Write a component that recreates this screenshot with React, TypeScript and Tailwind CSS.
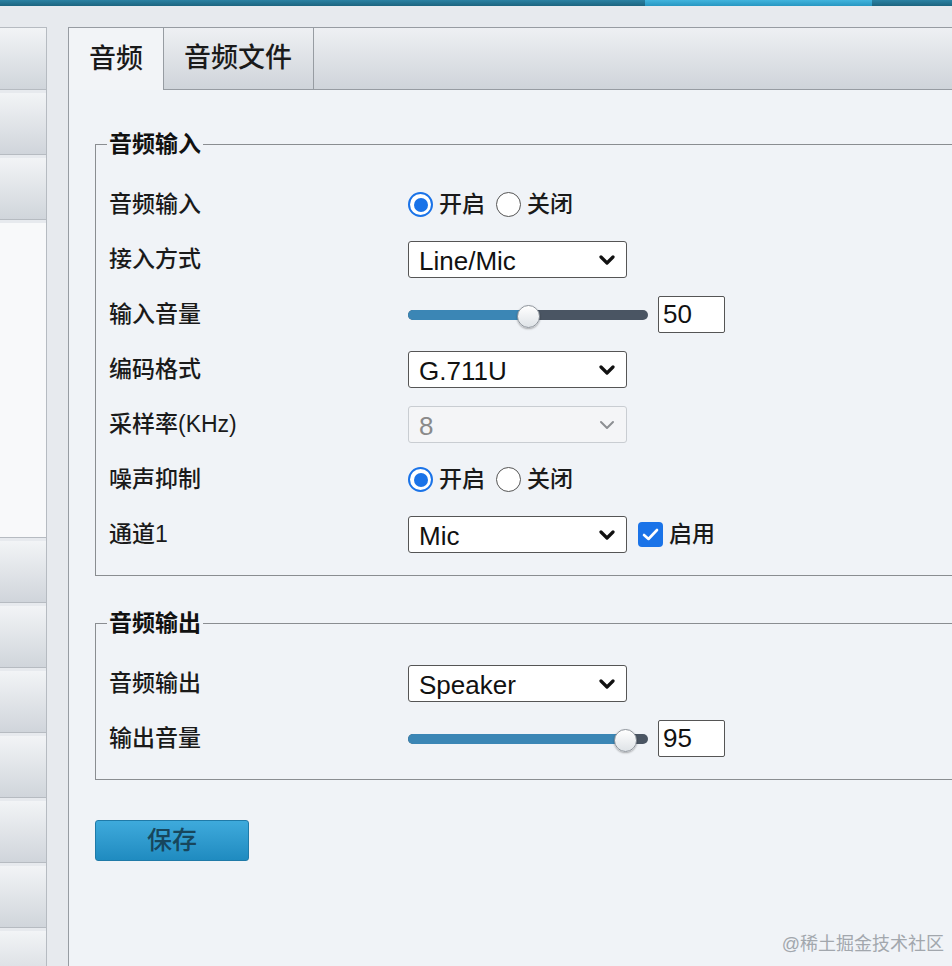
import { useState } from "react";

const Chevron = ({ disabled }: { disabled?: boolean }) => (
  <svg
    width="16"
    height="10"
    viewBox="0 0 16 10"
    className="pointer-events-none absolute right-[12px] top-1/2 -translate-y-1/2"
  >
    <path
      d="M2 2 L8 8 L14 2"
      fill="none"
      stroke={disabled ? "#8c8f93" : "#111"}
      strokeWidth={disabled ? 2 : 3.2}
      strokeLinecap="round"
      strokeLinejoin="round"
    />
  </svg>
);

const Select = ({
  value,
  options,
  disabled,
}: {
  value: string;
  options: string[];
  disabled?: boolean;
}) => (
  <div className="relative w-[219px] h-[37px]">
    <select
      defaultValue={value}
      disabled={disabled}
      className={
        disabled
          ? "appearance-none w-full h-full rounded-[3px] border border-[#c9cdd2] bg-[#f4f5f7] pl-[10px] text-[26px] text-[#8a8a8a] outline-none"
          : "appearance-none w-full h-full rounded-[3px] border border-[#555] bg-white pl-[10px] text-[26px] text-[#111] outline-none"
      }
    >
      {options.map((o) => (
        <option key={o}>{o}</option>
      ))}
    </select>
    <Chevron disabled={disabled} />
  </div>
);

const Radio = ({ checked, label }: { checked: boolean; label: string }) => (
  <div className="flex items-center gap-[6px]">
    {checked ? (
      <div className="flex h-[25px] w-[25px] items-center justify-center rounded-full border-[2.5px] border-[#1a73e8] bg-white">
        <div className="h-[14px] w-[14px] rounded-full bg-[#1a73e8]" />
      </div>
    ) : (
      <div className="h-[25px] w-[25px] rounded-full border-[1.5px] border-[#555] bg-white" />
    )}
    <span className="text-[23px] font-medium leading-none">{label}</span>
  </div>
);

const OnOff = () => (
  <div className="flex items-center gap-[11px]">
    <Radio checked label="开启" />
    <Radio checked={false} label="关闭" />
  </div>
);

const Slider = ({ value }: { value: number }) => {
  const pos = 11.5 + (217 * value) / 100;
  return (
    <div className="flex items-center gap-[10px]">
      <div className="relative h-[10px] w-[240px] rounded-full bg-[#4a5563]">
        <div
          className="absolute left-0 top-0 h-full rounded-full bg-[#3b86b5]"
          style={{ width: pos }}
        />
        <div
          className="absolute top-[-5px] h-[23px] w-[23px] rounded-full border border-[#8e949b] bg-gradient-to-b from-white to-[#dfe3e7] shadow-[0_1px_2px_rgba(0,0,0,0.3)]"
          style={{ left: pos - 11.5 }}
        />
      </div>
      <div className="flex h-[37px] w-[67px] items-center rounded-[2px] border border-[#555] bg-white pl-[4px] text-[26px] text-[#111]">
        {value}
      </div>
    </div>
  );
};

const Row = ({ label, children }: { label: string; children: React.ReactNode }) => (
  <div className="flex h-[55px] items-center">
    <div className="w-[299px] shrink-0 text-[23px] font-medium text-[#1a1a1a]">{label}</div>
    {children}
  </div>
);

const Group = ({
  title,
  className,
  children,
}: {
  title: string;
  className: string;
  children: React.ReactNode;
}) => (
  <fieldset
    className={`w-[880px] border border-[#8a8d91] pl-[13px] pt-[18px] pb-[13px] ${className}`}
  >
    <legend className="-ml-[2px] px-[2px] text-[23px] font-bold leading-[30px] text-[#111]">
      {title}
    </legend>
    {children}
  </fieldset>
);

const App = () => {
  const [tab, setTab] = useState("audio");
  const side =
    "h-[62px] shrink-0 border-b border-[#b6bbc1] bg-gradient-to-b from-[#f2f4f6] to-[#d0d5db]";

  return (
    <div className="relative h-[966px] w-[952px] overflow-hidden bg-[#e7eaee] font-['Liberation_Sans','Noto_Sans_CJK_SC',sans-serif] text-[#1a1a1a]">
      <div className="flex h-[6px]">
        <div className="w-[645px] bg-gradient-to-b from-[#2b82a3] to-[#1d6580]" />
        <div className="w-[227px] bg-gradient-to-b from-[#41b4dd] to-[#2797c2]" />
        <div className="flex-1 bg-gradient-to-b from-[#2b82a3] to-[#1d6580]" />
      </div>

      <div className="flex h-[960px] pt-[21px]">
        <div className="flex w-[47px] shrink-0 flex-col gap-[3px] overflow-hidden border-r border-t border-[#b6bbc1]">
          <div className={side} />
          <div className={side} />
          <div className={side} />
          <div className="h-[315px] shrink-0 border-b border-[#b6bbc1] bg-[#f8f9fa]" />
          <div className={side} />
          <div className={side} />
          <div className={side} />
          <div className={side} />
          <div className={side} />
          <div className={side} />
          <div className={side} />
        </div>

        <div className="ml-[21px] min-w-0 flex-1 border-l border-t border-[#979ca2] bg-[#f0f3f7]">
          <div className="flex h-[62px] text-[27px] font-medium text-[#1a1a1a]">
            <button
              onClick={() => setTab("audio")}
              className={
                tab === "audio"
                  ? "w-[95px] shrink-0 border-r border-[#979ca2] bg-[#f2f4f7] pl-[20px] text-left"
                  : "w-[95px] shrink-0 border-b border-r border-[#979ca2] bg-gradient-to-b from-[#eef0f3] to-[#cfd4da] pl-[20px] text-left"
              }
            >
              音频
            </button>
            <button
              onClick={() => setTab("file")}
              className={
                tab === "file"
                  ? "w-[150px] shrink-0 border-r border-[#979ca2] bg-[#f2f4f7] pl-[20px] text-left"
                  : "w-[150px] shrink-0 border-b border-r border-[#979ca2] bg-gradient-to-b from-[#eef0f3] to-[#cfd4da] pl-[20px] text-left"
              }
            >
              音频文件
            </button>
            <div className="flex-1 border-b border-[#979ca2] bg-gradient-to-b from-[#eef0f3] to-[#cfd4da]" />
          </div>

          <div className="pl-[26px]">
            <Group title="音频输入" className="mt-[39px]">
              <Row label="音频输入">
                <OnOff />
              </Row>
              <Row label="接入方式">
                <Select value="Line/Mic" options={["Line/Mic", "Line"]} />
              </Row>
              <Row label="输入音量">
                <Slider value={50} />
              </Row>
              <Row label="编码格式">
                <Select value="G.711U" options={["G.711U", "G.711A", "AAC"]} />
              </Row>
              <Row label="采样率(KHz)">
                <Select value="8" options={["8", "16"]} disabled />
              </Row>
              <Row label="噪声抑制">
                <OnOff />
              </Row>
              <Row label="通道1">
                <Select value="Mic" options={["Mic", "Line"]} />
                <div className="ml-[11px] flex items-center gap-[6px]">
                  <div className="flex h-[25px] w-[25px] items-center justify-center rounded-[4px] bg-[#1a73e8]">
                    <svg width="17" height="13" viewBox="0 0 17 13">
                      <path
                        d="M2 7 L6.5 11 L15 2"
                        fill="none"
                        stroke="#fff"
                        strokeWidth="2.6"
                        strokeLinecap="round"
                        strokeLinejoin="round"
                      />
                    </svg>
                  </div>
                  <span className="text-[23px] font-medium">启用</span>
                </div>
              </Row>
            </Group>

            <Group title="音频输出" className="mt-[32px]">
              <Row label="音频输出">
                <Select value="Speaker" options={["Speaker", "Line Out"]} />
              </Row>
              <Row label="输出音量">
                <Slider value={95} />
              </Row>
            </Group>

            <button className="mt-[40px] h-[41px] w-[154px] rounded-[3px] border border-[#1f7aa8] bg-gradient-to-b from-[#3eaadc] to-[#1f8bc0] text-[25px] font-medium text-[#17465c]">
              保存
            </button>
          </div>
        </div>
      </div>

      <div className="absolute bottom-[8px] right-[8px] text-[18px] text-[#a2a7ad]">
        @稀土掘金技术社区
      </div>
    </div>
  );
};

export default App;
